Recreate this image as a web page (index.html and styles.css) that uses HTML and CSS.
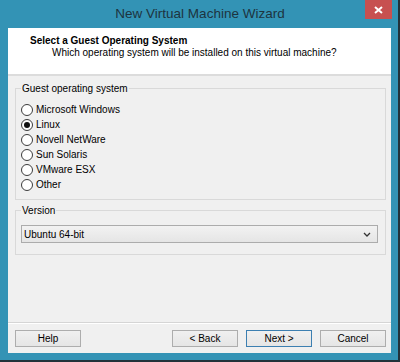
FILE: index.html
```html
<!DOCTYPE html>
<html lang="en">

<head>
    <meta charset="UTF-8" />
    <meta name="viewport" content="width=device-width, initial-scale=1.0" />
    <title>New Virtual Machine Wizard</title>
    <link rel="stylesheet" href="styles.css">
</head>

<body>
    <div class="window">
        <div class="titlebar">
            <div class="title">New Virtual Machine Wizard</div>
            <button class="close" aria-label="Close">
                <svg width="9" height="8" viewBox="0 0 9 8">
                    <path d="M1 1 L8 7 M8 1 L1 7" stroke="#fff" stroke-width="2" fill="none" />
                </svg>
            </button>
        </div>

        <div class="client">
            <div class="header">
                <div class="heading">Select a Guest Operating System</div>
                <div class="subheading">Which operating system will be installed on this virtual machine?</div>
            </div>

            <div class="content">
                <fieldset class="group os-group">
                    <legend>Guest operating system</legend>
                    <div class="radio"><span class="circle"></span>Microsoft Windows</div>
                    <div class="radio"><span class="circle checked"></span>Linux</div>
                    <div class="radio"><span class="circle"></span>Novell NetWare</div>
                    <div class="radio"><span class="circle"></span>Sun Solaris</div>
                    <div class="radio"><span class="circle"></span>VMware ESX</div>
                    <div class="radio"><span class="circle"></span>Other</div>
                </fieldset>

                <fieldset class="group version-group">
                    <legend>Version</legend>
                    <div class="select">
                        <span>Ubuntu 64-bit</span>
                        <svg width="8" height="5" viewBox="0 0 8 5">
                            <path d="M1 1 L4 4 L7 1" stroke="#333" stroke-width="1.3" fill="none" />
                        </svg>
                    </div>
                </fieldset>
            </div>

            <div class="footer">
                <button class="btn">Help</button>
                <div class="spacer"></div>
                <button class="btn">&lt; Back</button>
                <button class="btn default">Next &gt;</button>
                <button class="btn">Cancel</button>
            </div>
        </div>
    </div>
</body>

</html>
```

FILE: styles.css
```css
body {
    margin: 0;
    padding: 0;
    background: #22323a;
    font-family: "Liberation Sans", Arial, sans-serif;
    font-size: 10px;
    color: #000;
}

.window {
    width: 398px;
    height: 360px;
    background: #3393b5;
    display: flex;
    flex-direction: column;
}

.titlebar {
    height: 28px;
    display: flex;
    align-items: flex-start;
    flex-shrink: 0;
}

.title {
    flex: 1;
    padding-left: 35px;
    text-align: center;
    line-height: 28px;
    font-size: 13.5px;
    color: #1d3440;
}

.close {
    width: 27px;
    height: 19px;
    margin-right: 6px;
    padding: 0;
    border: none;
    background: #c75050;
    display: flex;
    align-items: center;
    justify-content: center;
}

.client {
    flex: 1;
    margin: 0 7px 7px 8px;
    background: #f0f0f0;
    display: flex;
    flex-direction: column;
}

.header {
    height: 48px;
    box-sizing: border-box;
    background: #fff;
    border-bottom: 2px solid #dcdcdc;
    padding-top: 6px;
}

.heading {
    font-weight: bold;
    padding-left: 22px;
    line-height: 13px;
}

.subheading {
    padding-left: 44px;
    margin-top: -1px;
    line-height: 13px;
}

.content {
    flex: 1;
}

.group {
    margin: 6px 5px 0 7px;
    padding: 0 7px 0 5px;
    border: 1px solid #d9d9d9;
    border-radius: 0;
}

.group legend {
    padding: 0 1px;
    line-height: 13px;
    color: #000;
}

.os-group {
    padding-top: 7px;
    padding-bottom: 7px;
}

.radio {
    height: 15px;
    display: flex;
    align-items: center;
}

.circle {
    width: 10px;
    height: 10px;
    border: 1px solid #3c3c3c;
    border-radius: 50%;
    background: #fff;
    margin-right: 3px;
    display: flex;
    align-items: center;
    justify-content: center;
}

.circle.checked::after {
    content: "";
    width: 6px;
    height: 6px;
    border-radius: 50%;
    background: #111;
}

.version-group {
    margin-top: 4px;
    padding-top: 8px;
    padding-bottom: 11px;
}

.select {
    height: 18px;
    box-sizing: border-box;
    border: 1px solid #acacac;
    background: linear-gradient(#f2f2f2, #e5e5e5);
    display: flex;
    align-items: center;
    justify-content: space-between;
    padding: 0 6px 0 2px;
}

.footer {
    border-top: 1px solid #d5d5d5;
    box-shadow: inset 0 1px 0 #fff;
    padding: 7px 5px 6px 7px;
    margin-top: -2px;
    display: flex;
    gap: 8px;
}

.spacer {
    flex: 1;
}

.btn {
    width: 66px;
    height: 17px;
    padding: 0;
    border: 1px solid #adadad;
    background: linear-gradient(#f0f0f0, #e5e5e5);
    font-family: "Liberation Sans", Arial, sans-serif;
    font-size: 10px;
    color: #000;
}

.btn.default {
    border-color: #3c7fb1;
}
```
